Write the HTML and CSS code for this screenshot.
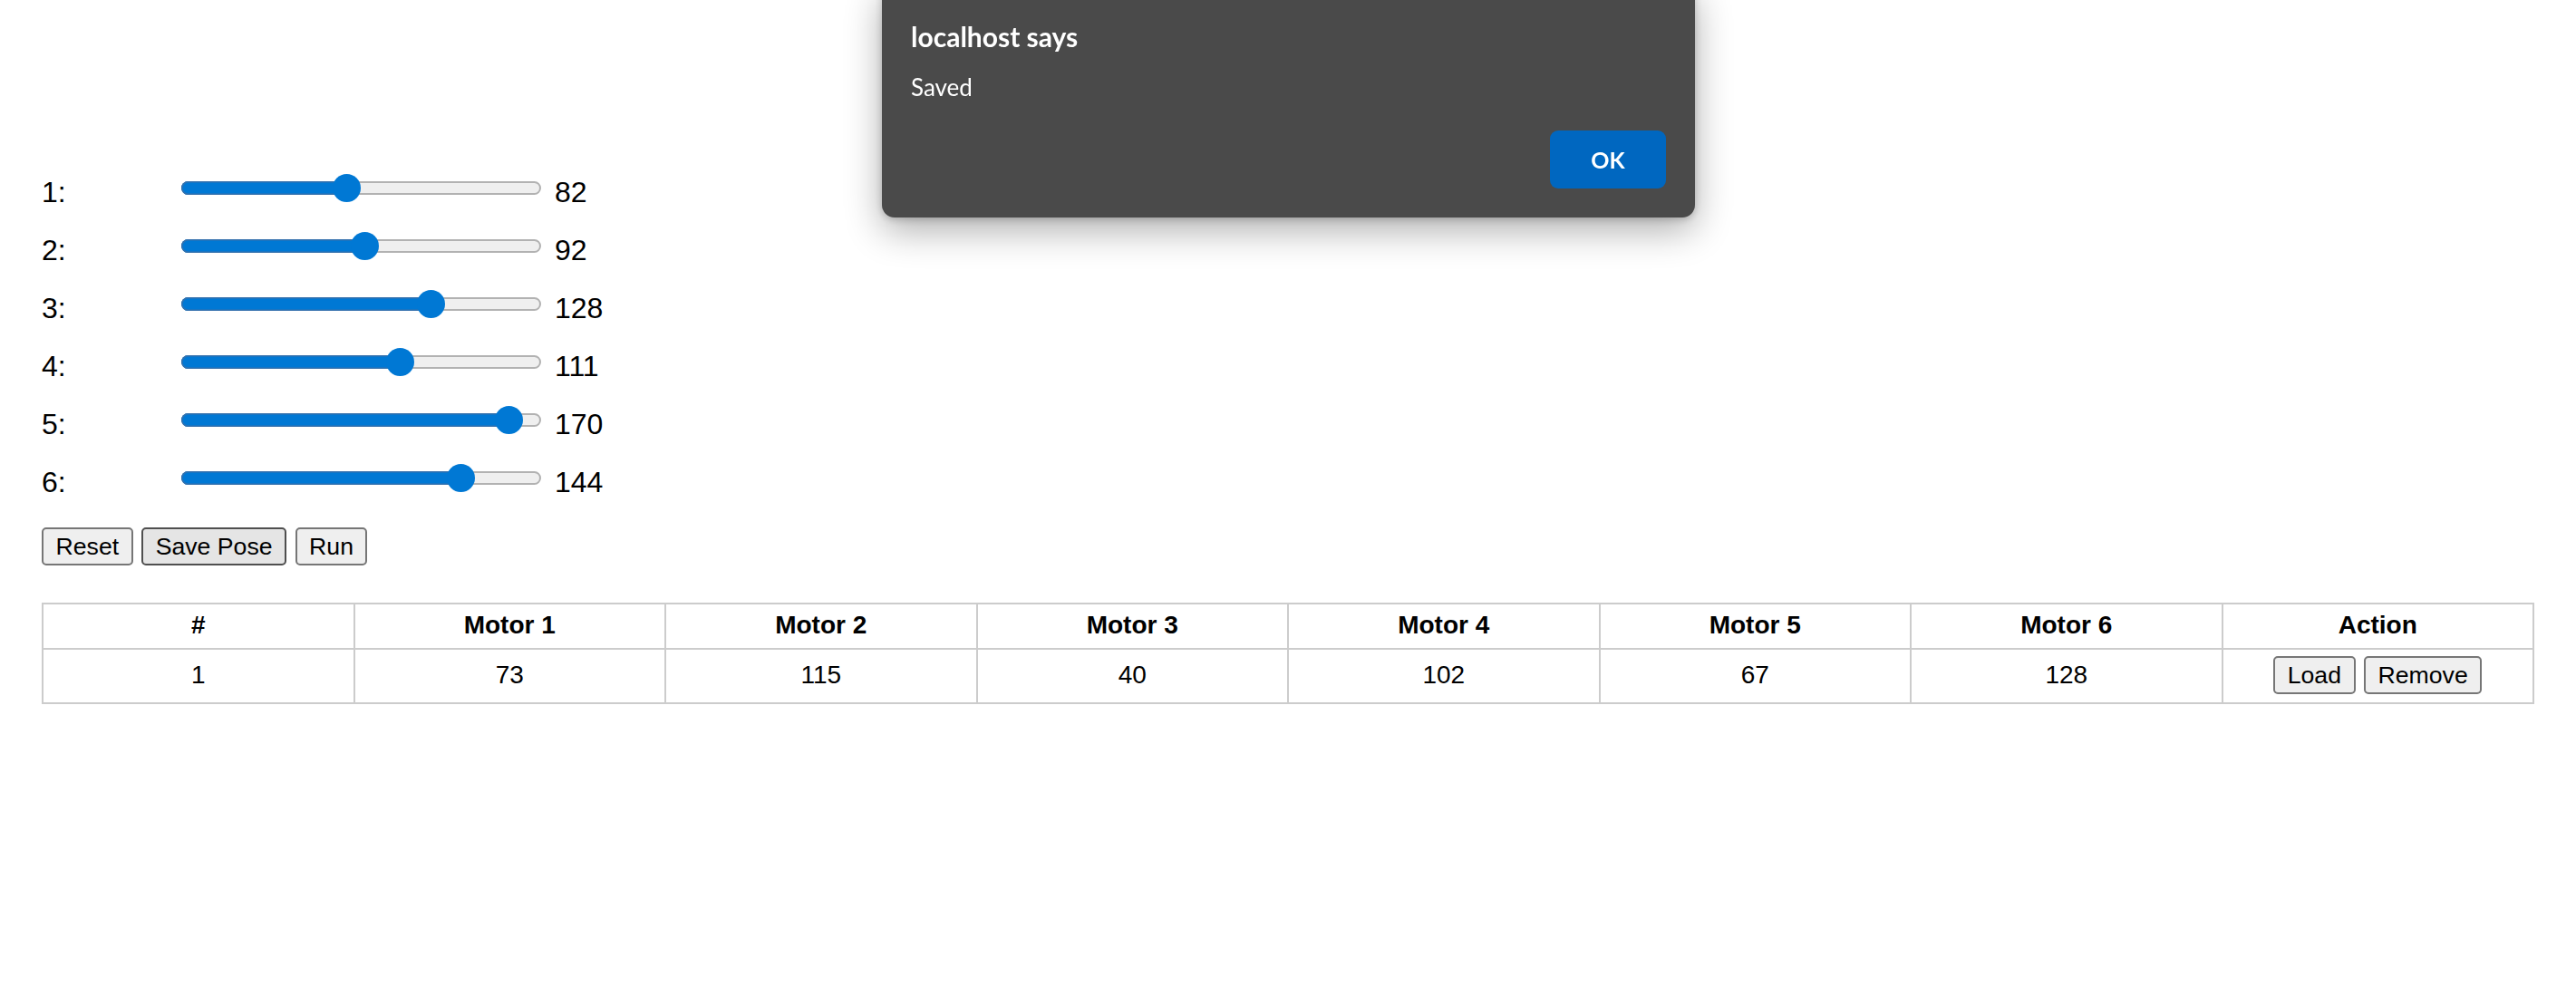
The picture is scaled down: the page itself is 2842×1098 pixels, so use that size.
FILE: index.html
```html
<!DOCTYPE html>
<html>
<head>
<meta charset="utf-8">
<title>Robot Arm</title>
<link rel="stylesheet" href="styles.css">
</head>
<body>
<div class="page">
  <div class="sliders">
    <div class="row"><span class="label">1:</span><div class="slider"><div class="track"><div class="fill" style="width:182.2px"></div></div><div class="thumb" style="left:166.7px"></div></div><span class="val">82</span></div>
    <div class="row"><span class="label">2:</span><div class="slider"><div class="track"><div class="fill" style="width:202.6px"></div></div><div class="thumb" style="left:187.1px"></div></div><span class="val">92</span></div>
    <div class="row"><span class="label">3:</span><div class="slider"><div class="track"><div class="fill" style="width:275.8px"></div></div><div class="thumb" style="left:260.3px"></div></div><span class="val">128</span></div>
    <div class="row"><span class="label">4:</span><div class="slider"><div class="track"><div class="fill" style="width:241.2px"></div></div><div class="thumb" style="left:225.7px"></div></div><span class="val">111</span></div>
    <div class="row"><span class="label">5:</span><div class="slider"><div class="track"><div class="fill" style="width:361.2px"></div></div><div class="thumb" style="left:345.7px"></div></div><span class="val">170</span></div>
    <div class="row"><span class="label">6:</span><div class="slider"><div class="track"><div class="fill" style="width:308.3px"></div></div><div class="thumb" style="left:292.8px"></div></div><span class="val">144</span></div>
  </div>
  <div class="controls">
    <button class="btn">Reset</button>
    <button class="btn btn-active">Save Pose</button>
    <button class="btn">Run</button>
  </div>
  <table class="poses">
    <thead>
      <tr><th>#</th><th>Motor 1</th><th>Motor 2</th><th>Motor 3</th><th>Motor 4</th><th>Motor 5</th><th>Motor 6</th><th>Action</th></tr>
    </thead>
    <tbody>
      <tr><td>1</td><td>73</td><td>115</td><td>40</td><td>102</td><td>67</td><td>128</td><td><div class="actions"><button class="btn">Load</button><button class="btn">Remove</button></div></td></tr>
    </tbody>
  </table>
</div>
<div class="dialog">
  <div class="dlg-title">localhost says</div>
  <div class="dlg-msg">Saved</div>
  <div class="dlg-foot"><button class="dlg-ok">OK</button></div>
</div>
</body>
</html>
```
FILE: styles.css
```css
html, body {
  margin: 0;
  padding: 0;
  background: #ffffff;
}
body {
  font-family: "Liberation Sans", Arial, sans-serif;
  color: #000;
}
.page {
  padding: 180px 46px 0 46px;
}
.sliders {
  display: flex;
  flex-direction: column;
}
.row {
  display: flex;
  align-items: center;
  height: 64px;
  font-size: 32px;
}
.label {
  width: 154px;
  flex: none;
}
.slider {
  position: relative;
  width: 397px;
  height: 32px;
  margin-bottom: 10px;
  flex: none;
}
.track {
  position: relative;
  margin-top: 8.5px;
  height: 15px;
  box-sizing: border-box;
  border: 2px solid #b2b2b2;
  border-radius: 8px;
  background: #efefef;
}
.fill {
  position: absolute;
  left: -2px;
  top: -2px;
  bottom: -2px;
  background: #0078d4;
  border-radius: 8px;
  box-shadow: inset 0 0 0 1.5px #3571ad;
}
.thumb {
  position: absolute;
  top: 0.5px;
  width: 31px;
  height: 31px;
  border-radius: 50%;
  background: #0078d4;
}
.val {
  margin-left: 15px;
}
.controls {
  display: flex;
  gap: 9.5px;
  margin-top: 18px;
}
.btn {
  font-family: "Liberation Sans", Arial, sans-serif;
  font-size: 26.67px;
  height: 42px;
  padding: 0 13.5px;
  background: #efefef;
  border: 2px solid #767676;
  border-radius: 5px;
  color: #000;
  line-height: 1;
}
.btn-active {
  background: #e5e5e5;
  border-color: #4f4f4f;
}
.poses {
  margin-top: 41px;
  width: 100%;
  table-layout: fixed;
  border-collapse: collapse;
  font-size: 28px;
}
.poses th, .poses td {
  border: 2px solid #cccccc;
  padding: 7px 8px 9px 8px;
  text-align: center;
  vertical-align: middle;
}
.poses th {
  font-weight: bold;
}
.actions {
  display: flex;
  justify-content: center;
  gap: 9.5px;
}
.dialog {
  position: fixed;
  left: 973px;
  top: -20px;
  width: 897px;
  height: 260px;
  box-sizing: border-box;
  padding: 42px 32px 32px 32px;
  background: #4a4a4a;
  border-radius: 14px;
  box-shadow: 0 14px 40px rgba(0, 0, 0, 0.32), 0 2px 8px rgba(0, 0, 0, 0.2);
  color: #ffffff;
  font-family: Lato, "Noto Sans", sans-serif;
  display: flex;
  flex-direction: column;
}
.dlg-title {
  font-size: 30px;
  font-weight: bold;
  line-height: 36px;
}
.dlg-msg {
  font-size: 26px;
  line-height: 31px;
  margin-top: 23px;
}
.dlg-foot {
  display: flex;
  justify-content: flex-end;
  margin-top: auto;
}
.dlg-ok {
  width: 128px;
  height: 64px;
  border: none;
  border-radius: 9px;
  background: #0067c0;
  color: #ffffff;
  font-family: Lato, "Noto Sans", sans-serif;
  font-size: 25px;
  font-weight: bold;
}
```
